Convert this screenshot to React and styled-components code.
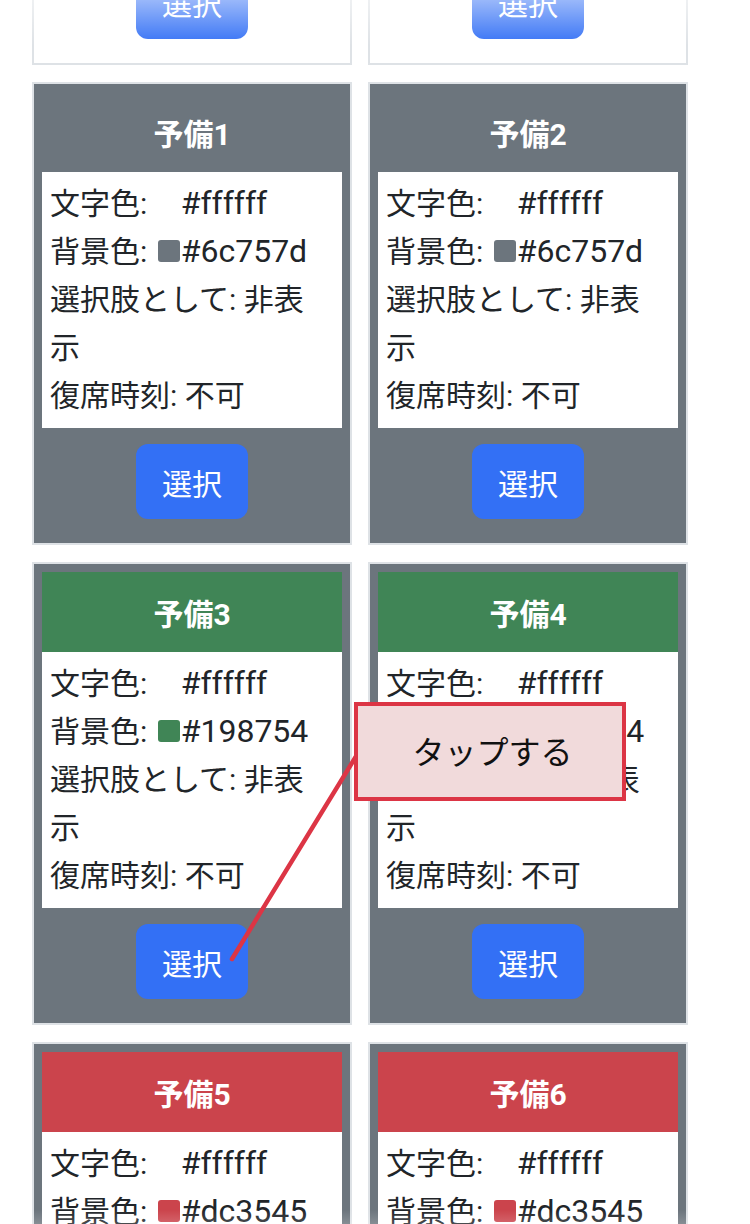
import React from "react";
import styled, { createGlobalStyle } from "styled-components";

const GlobalStyle = createGlobalStyle`
  html, body {
    margin: 0;
    padding: 0;
    background: #ffffff;
    overflow: hidden;
  }
  body {
    font-family: Roboto, "Noto Sans CJK JP", sans-serif;
  }
`;

const Page = styled.div`
  position: relative;
  width: 750px;
  height: 1224px;
  overflow: hidden;
  background: #ffffff;
`;

const Grid = styled.div`
  display: grid;
  grid-template-columns: 320px 320px;
  column-gap: 16px;
  row-gap: 17px;
  padding-left: 32px;
  margin-top: -398px;
`;

const Card = styled.div`
  box-sizing: border-box;
  border: 2px solid #dee2e6;
  background: ${(p) => p.$bg};
  padding: 8px;
  display: flex;
  flex-direction: column;
  align-items: stretch;
  & > * {
    flex-shrink: 0;
  }
`;

const Header = styled.div`
  height: 80px;
  display: flex;
  align-items: center;
  justify-content: center;
  background: ${(p) => p.$bg};
  color: ${(p) => p.$fg};
  font-family: Roboto, "Noto Sans CJK JP", sans-serif;
  font-weight: 700;
  font-size: 30px;
`;

const Body = styled.div`
  background: #ffffff;
  padding: 8px 10px 8px 8px;
  color: #212529;
  font-family: Roboto, "Noto Sans CJK JP", sans-serif;
  font-size: 30px;
  line-height: 48px;
`;

const Line = styled.div`
  min-height: 48px;
`;

const Value = styled.span`
  font-family: Roboto, "Noto Sans CJK JP", sans-serif;
  font-size: 32px;
  line-height: 1;
`;

const Swatch = styled.span`
  display: inline-block;
  width: 22px;
  height: 22px;
  border-radius: 3px;
  margin-left: 3px;
  margin-right: 1px;
  vertical-align: baseline;
  background: ${(p) => p.$color};
`;

const ButtonRow = styled.div`
  display: flex;
  justify-content: center;
  padding: 16px 0;
`;

const SelectButton = styled.button`
  width: 112px;
  height: 75px;
  border: none;
  border-radius: 12px;
  background: #3370f5;
  color: #ffffff;
  font-family: "Noto Sans CJK JP", sans-serif;
  font-size: 30px;
  padding: 0;
  cursor: pointer;
`;

const TopFade = styled.div`
  position: absolute;
  left: 0;
  top: 0;
  width: 100%;
  height: 46px;
  background: linear-gradient(
    to bottom,
    rgba(255, 255, 255, 0.5),
    rgba(255, 255, 255, 0)
  );
  pointer-events: none;
`;

const BottomFade = styled.div`
  position: absolute;
  left: 0;
  bottom: 0;
  width: 100%;
  height: 14px;
  background: linear-gradient(
    to bottom,
    rgba(255, 255, 255, 0),
    rgba(255, 255, 255, 0.18)
  );
  pointer-events: none;
`;

const Pointer = styled.svg`
  position: absolute;
  left: 0;
  top: 0;
  pointer-events: none;
`;

const Callout = styled.div`
  position: absolute;
  left: 354px;
  top: 702px;
  width: 272px;
  height: 99px;
  box-sizing: border-box;
  border: 4px solid #dc3545;
  background: #f1dadb;
  display: flex;
  align-items: center;
  justify-content: center;
  padding: 0 0 4px 5px;
  color: #111111;
  font-family: "Noto Sans CJK JP", sans-serif;
  font-size: 32px;
`;

const rows = [
  [
    { name: "着席", header: "#ffffff", fg: "#212529", card: "#ffffff", swatch: "#ffffff", text: "#212529" },
    { name: "着席", header: "#ffffff", fg: "#212529", card: "#ffffff", swatch: "#ffffff", text: "#212529" },
  ],
  [
    { name: "予備1", header: "#6c757d", fg: "#ffffff", card: "#6c757d", swatch: "#6c757d", text: "#6c757d" },
    { name: "予備2", header: "#6c757d", fg: "#ffffff", card: "#6c757d", swatch: "#6c757d", text: "#6c757d" },
  ],
  [
    { name: "予備3", header: "#408556", fg: "#ffffff", card: "#6c757d", swatch: "#408556", text: "#198754" },
    { name: "予備4", header: "#408556", fg: "#ffffff", card: "#6c757d", swatch: "#408556", text: "#198754" },
  ],
  [
    { name: "予備5", header: "#cb444c", fg: "#ffffff", card: "#6c757d", swatch: "#cb444c", text: "#dc3545" },
    { name: "予備6", header: "#cb444c", fg: "#ffffff", card: "#6c757d", swatch: "#cb444c", text: "#dc3545" },
  ],
];

function SeatCard({ item }) {
  return (
    <Card $bg={item.card}>
      <Header $bg={item.header} $fg={item.fg}>
        {item.name}
      </Header>
      <Body>
        <Line>
          文字色: <Swatch $color="#ffffff" />
          <Value>#ffffff</Value>
        </Line>
        <Line>
          背景色: <Swatch $color={item.swatch} />
          <Value>{item.text}</Value>
        </Line>
        <Line>選択肢として: 非表示</Line>
        <Line>復席時刻: 不可</Line>
      </Body>
      <ButtonRow>
        <SelectButton>選択</SelectButton>
      </ButtonRow>
    </Card>
  );
}

export default function App() {
  return (
    <Page>
      <GlobalStyle />
      <Grid>
        {rows.flat().map((item, i) => (
          <SeatCard key={i} item={item} />
        ))}
      </Grid>
      <Pointer width="750" height="1224" viewBox="0 0 750 1224">
        <line
          x1="232"
          y1="959"
          x2="366"
          y2="740"
          stroke="#dc3545"
          strokeWidth="4.5"
          strokeLinecap="round"
        />
      </Pointer>
      <Callout>タップする</Callout>
      <TopFade />
      <BottomFade />
    </Page>
  );
}
